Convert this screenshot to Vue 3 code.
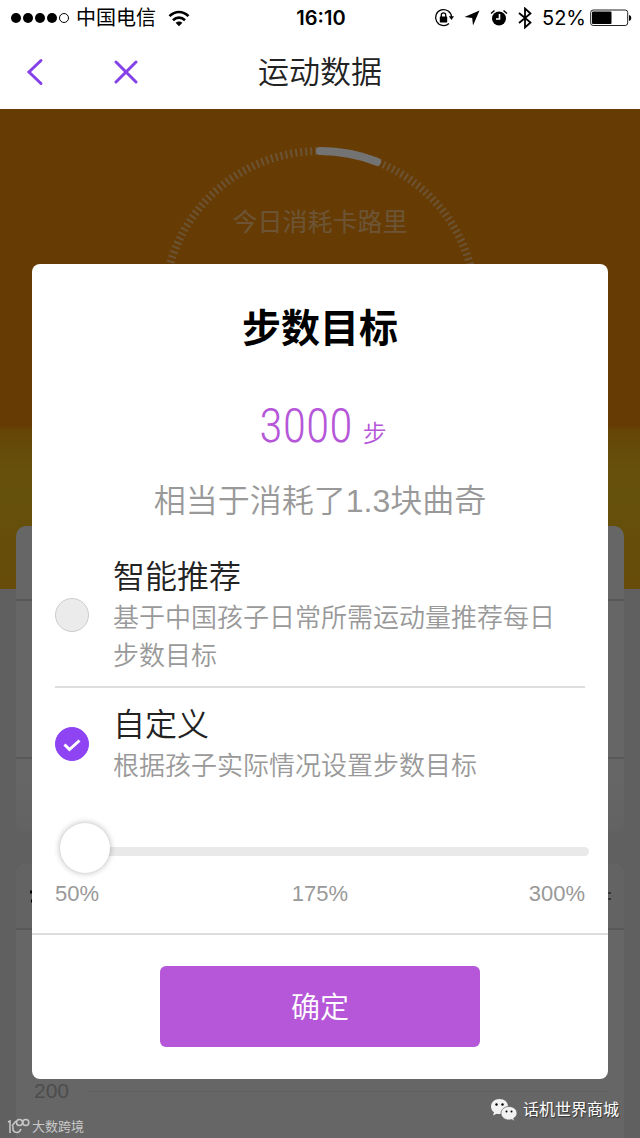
<script setup>
import { ref } from 'vue'

const mode = ref('custom')
const percent = ref(50)
const options = [
  { id: 'smart', title: '智能推荐', text: '基于中国孩子日常所需运动量推荐每日步数目标' },
  { id: 'custom', title: '自定义', text: '根据孩子实际情况设置步数目标' }
]
</script>

<template>
  <div class="app">
    <header>
      <div class="status">
        <div class="carrier">
          <svg width="60" height="14" viewBox="0 0 60 14">
            <circle cx="6" cy="7" r="5" /><circle cx="18" cy="7" r="5" /><circle cx="30" cy="7" r="5" /><circle cx="42" cy="7" r="5" />
            <circle cx="54" cy="7" r="4.5" fill="none" stroke="#000" />
          </svg>
          <span>中国电信</span>
          <svg class="wifi" width="22" height="17" viewBox="0 0 22 17" fill="none" stroke="#000" stroke-width="2.6">
            <path d="M1.5 6.2C7 .6 15 .6 20.500 6.2M5 10.200C8.500 6.800 13.500 6.800 17 10.200" />
            <path d="M7.600 12.800C9.600 10.900 12.400 10.900 14.400 12.800L11 16.200Z" fill="#000" stroke="none" />
          </svg>
        </div>
        <time>16:10</time>
        <div class="tray">
          <svg width="20" height="20" viewBox="0 0 20 20">
            <path d="M17.600 9A8 8 0 1 0 15 15.500" fill="none" stroke="#000" stroke-width="1.300" />
            <path d="M14.800 8.200H20L17.500 12Z" />
            <rect x="5.800" y="8.500" width="7.400" height="6" rx=".6" />
            <path d="M7.300 9V7a2.200 2.200 0 0 1 4.400 0v2" fill="none" stroke="#000" stroke-width="1.300" />
          </svg>
          <svg width="16" height="16" viewBox="0 0 16 16"><path d="M15.500.5 9 15.500 8.200 8 .5 7Z" /></svg>
          <svg width="18" height="18" viewBox="0 0 18 18">
            <circle cx="9" cy="9.500" r="7" />
            <path d="M1 4.500 4.500 1.500M17 4.500 13.500 1.500" stroke="#000" stroke-width="1.500" />
            <path d="M9.500 5v5H6" fill="none" stroke="#fff" stroke-width="1.600" />
          </svg>
          <svg width="14" height="22" viewBox="0 0 14 22"><path d="M1 6 12.500 15.500 7 20.500V1.500L12.500 6.500 1 16" fill="none" stroke="#000" stroke-width="1.800" /></svg>
          <span>52%</span>
          <svg width="42" height="18" viewBox="0 0 42 18">
            <rect x=".7" y="1" width="37" height="15.500" rx="2.500" fill="none" stroke="#222" />
            <rect x="2" y="2.500" width="19.500" height="12.500" rx="1" /><path d="M39 6c3 .5 3 5.500 0 6Z" />
          </svg>
        </div>
      </div>
      <nav>
        <div class="nav-actions">
          <button aria-label="返回">
            <svg width="18" height="28" viewBox="0 0 18 28"><path d="M15 2.500 3 14l12 11.500" /></svg>
          </button>
          <button aria-label="关闭">
            <svg width="24" height="24" viewBox="0 0 24 24"><path d="M2 2l20 20M22 2 2 22" /></svg>
          </button>
        </div>
        <h1>运动数据</h1>
      </nav>
    </header>

    <main>
      <section class="hero">
        <svg class="ring" width="320" height="320" viewBox="0 0 320 320" fill="none">
          <circle cx="160" cy="160" r="156" stroke="#fff" stroke-opacity=".42" stroke-width="8" stroke-dasharray="2 3" />
          <path d="M160 4A156 156 0 0 1 217 14.800" stroke="#fff" stroke-width="8" stroke-linecap="round" />
        </svg>
        <p>今日消耗卡路里</p>
      </section>
      <section class="card summary">
        <div class="row head"></div>
        <div class="row body"></div>
      </section>
      <section class="card chart">
        <div class="row head">
          <svg width="10" height="20" viewBox="0 0 10 20"><path d="M2 6h4M3 15h3" stroke="#000" stroke-width="3" /></svg>
          <svg width="12" height="20" viewBox="0 0 12 20"><path d="M2 7h9M2 13h9" stroke="#777" stroke-width="2" /></svg>
        </div>
        <div class="axis"><span>200</span><i></i></div>
      </section>

      <div class="overlay">
        <form class="dialog" role="dialog" aria-labelledby="goal-title" @submit.prevent>
          <h2 id="goal-title">步数目标</h2>
          <p class="value"><strong>3000</strong><span>步</span></p>
          <p class="equal">相当于消耗了1.3块曲奇</p>
          <label v-for="o in options" :key="o.id" class="option">
            <input v-model="mode" type="radio" name="mode" :value="o.id">
            <svg class="mark" width="34" height="34" viewBox="0 0 34 34">
              <circle cx="17" cy="17" r="16.500" />
              <path d="M9.500 17.500l5 5 10-9" />
            </svg>
            <span class="copy"><b>{{ o.title }}</b><small>{{ o.text }}</small></span>
          </label>
          <input v-model="percent" class="slider" type="range" min="50" max="300" aria-label="步数目标百分比">
          <div class="scale"><span>50%</span><span>175%</span><span>300%</span></div>
          <footer><button class="confirm" type="submit">确定</button></footer>
        </form>
      </div>

      <div class="marks">
        <div class="brand">
          <svg width="23" height="18" viewBox="0 0 23 18" fill="none" stroke="#c9c9c9" stroke-width="1.500">
            <path d="M1 4 3 3v12M9 3 5 8M6 8c-1 8 6 8 8 3" />
            <circle cx="12.500" cy="4.500" r="3" /><circle cx="18.800" cy="4.500" r="3" />
          </svg>
          <span>大数跨境</span>
        </div>
        <div class="account">
          <svg width="28" height="24" viewBox="0 0 28 24">
            <path d="M9.500 1C4.500 1 1 4.200 1 8.500c0 2.500 1.200 4.500 3 5.800L3 17.500l3.500-1.800c1 .3 2 .4 3 .4C14.500 16 18 13 18 8.500S14.500 1 9.500 1Z" fill="#f2f2f2" />
            <path d="M19 8.500c-4.500 0-8 3-8 6.700s3.500 6.800 8 6.800c1 0 1.900-.2 2.700-.5l2.800 1.800-.8-3c2-1.200 3.300-3 3.300-5.100 0-3.700-3.500-6.700-8-6.700Z" fill="#f2f2f2" stroke="#666" stroke-width=".8" />
            <circle cx="6.500" cy="6.500" r="1.200" /><circle cx="12.500" cy="6.500" r="1.200" /><circle cx="16.500" cy="13.500" r="1" /><circle cx="21.500" cy="13.500" r="1" />
          </svg>
          <span>话机世界商城</span>
        </div>
      </div>
    </main>
  </div>
</template>

<style>
body { margin: 0; }
</style>

<style scoped>
* { box-sizing: border-box; }
h1, h2, p { margin: 0; font-weight: 400; }
button { border: 0; padding: 0; background: none; font: inherit; }
svg { display: block; flex: none; }
.app {
  min-height: 100vh;
  display: flex;
  flex-direction: column;
  font-family: "Liberation Sans", "Noto Sans CJK SC", sans-serif;
  background: #fff;
}
header { border-bottom: 1px solid #fff; }
.status {
  height: 36px;
  display: grid;
  grid-template-columns: 1fr auto 1fr;
  align-items: center;
  padding: 0 8px 0 10px;
  font-size: 20px;
}
.status span { line-height: 30px; }
.carrier { display: flex; align-items: center; gap: 6px; }
.wifi { margin-left: 6px; }
.status time { font: 600 20px/30px Inter, sans-serif; }
.tray { display: flex; align-items: center; justify-content: flex-end; gap: 10px; }
.tray span { font-family: Inter, sans-serif; margin-right: -6px; }
nav {
  height: 72px;
  display: grid;
  grid-template-columns: 1fr auto 1fr;
  align-items: center;
}
.nav-actions { display: flex; align-items: center; gap: 70px; padding-left: 26px; }
.nav-actions path { fill: none; stroke: #8540e8; stroke-width: 3; stroke-linecap: round; }
h1 { padding-top: 2px; font-size: 31px; line-height: 44px; font-weight: 350; color: #222; }
main {
  flex: 1;
  position: relative;
  overflow: hidden;
  background: #d5d5d5;
}
.hero {
  height: 480px;
  position: relative;
  padding-top: 95px;
  text-align: center;
  font-size: 25px;
  line-height: 36px;
  color: rgba(255, 255, 255, .45);
  background: linear-gradient(#e3850b 66%, #e39a10 67%, #e3b01c 74%, #e3b41c 80%, #e3a812);
}
.ring { position: absolute; top: 38px; left: calc(50% - 160px); }
.card { margin: 0 16px; background: #e3e3e3; border-radius: 10px; overflow: hidden; }
.summary { margin-top: -63px; position: relative; }
.row { border-bottom: 2px solid #c6c6c6; }
.summary .head { height: 75px; }
.summary .body { height: 158px; }
.summary { padding-bottom: 73px; background: linear-gradient(#e3e3e3 80%, #dadada); }
.chart { margin-top: 32px; border-radius: 10px 10px 0 0; }
.chart .head { height: 66px; display: flex; align-items: center; justify-content: space-between; padding: 0 12px; background: #dcdcdc; }
.axis { display: flex; align-items: center; gap: 20px; margin-top: 146px; padding: 0 16px 32px 18px; font-size: 21px; line-height: 30px; color: #aaa; }
.axis i { flex: 1; border-top: 1px solid #d5d5d5; }
.overlay {
  position: absolute;
  inset: 0;
  padding: 155px 32px 0;
  background: rgba(0, 0, 0, .55);
}
.dialog { background: #fff; border-radius: 8px; padding-top: 36px; }
h2 { font-size: 39px; line-height: 58px; font-weight: 700; text-align: center; color: #000; }
.value {
  height: 80px;
  margin-top: 28px;
  padding-left: 6px;
  display: flex;
  justify-content: center;
  align-items: baseline;
  gap: 10px;
  line-height: 80px;
  color: #b557d8;
}
.value strong { font: 300 48px/80px "Roboto Condensed", "Liberation Sans Narrow", "Open Sans Condensed", Roboto, sans-serif; }
.value span { font-size: 24px; font-weight: 350; }
.equal { font-size: 32px; line-height: 48px; margin: 11px 0 15px; text-align: center; font-weight: 350; color: #999; }
.option {
  display: flex;
  align-items: center;
  gap: 24px;
  margin: 0 23px;
  padding: 15px 0 11px;
  position: relative;
}
.option + .option { border-top: 2px solid #ddd; }
.option input { position: absolute; opacity: 0; margin: 0; }
.mark circle { fill: #ebebeb; stroke: #ccc; }
.mark path { fill: none; stroke: none; stroke-width: 3; }
input:checked + .mark circle { fill: #8e44f2; stroke: #8e44f2; }
input:checked + .mark path { stroke: #fff; }
.copy { flex: 1; display: flex; flex-direction: column; padding-right: 14px; }
.copy b { font-size: 32px; line-height: 44px; font-weight: 350; color: #222; }
.copy small { font-size: 26px; line-height: 38px; font-weight: 350; color: #999; }
.slider {
  appearance: none;
  display: block;
  width: calc(100% - 47px);
  height: 52px;
  margin: 29px 19px 0 28px;
  background: none;
}
.slider::-webkit-slider-runnable-track { height: 9px; border-radius: 5px; background: #e9e9e9; }
.slider::-webkit-slider-thumb {
  appearance: none;
  width: 50px;
  height: 50px;
  margin-top: -24px;
  border-radius: 50%;
  background: #fff;
  box-shadow: 0 0 6px rgba(0, 0, 0, .3);
}
.scale {
  display: grid;
  grid-template-columns: 1fr auto 1fr;
  padding: 0 23px;
  margin-top: 2px;
  font-size: 22px;
  line-height: 30px;
  color: #999;
}
.scale span:last-child { text-align: right; }
footer { margin-top: 24px; padding: 31px 128px 32px; border-top: 2px solid #ddd; }
.confirm {
  display: block;
  width: 100%;
  height: 81px;
  padding-bottom: 4px;
  border-radius: 6px;
  background: #b557d8;
  color: #fff;
  font-size: 29px;
  font-weight: 350;
}
.marks {
  position: absolute;
  inset: auto 21px 2px 7px;
  display: flex;
  justify-content: space-between;
  align-items: flex-end;
}
.brand, .account { display: flex; align-items: center; }
.brand { gap: 2px; font-size: 13px; line-height: 18px; color: #c9c9c9; }
.account { gap: 5px; padding-bottom: 14px; font-size: 16px; line-height: 24px; color: #fff; text-shadow: 1px 1px 1px #333; }
</style>
